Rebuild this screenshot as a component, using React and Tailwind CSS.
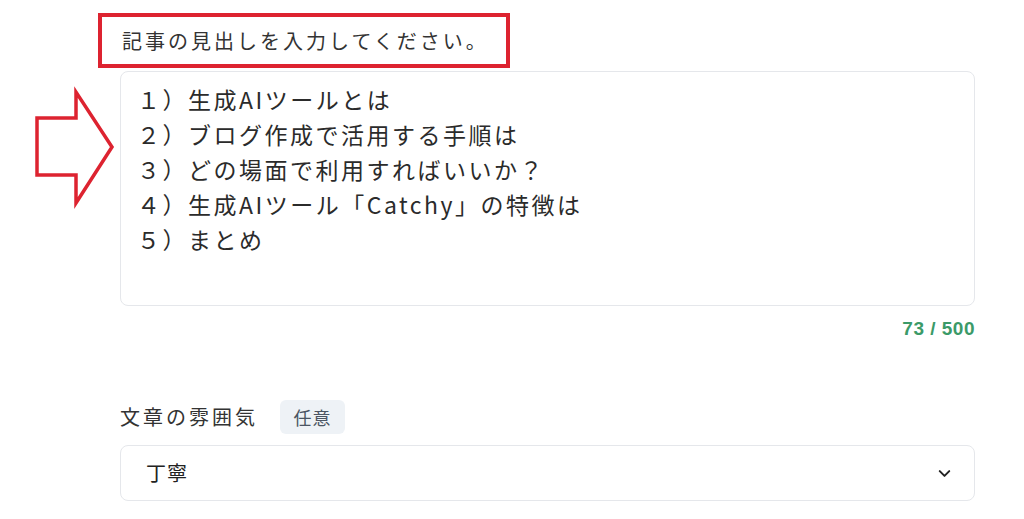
import { ChevronDown } from "lucide-react";

const HEADINGS = [
  "１）生成AIツールとは",
  "２）ブログ作成で活用する手順は",
  "３）どの場面で利用すればいいか？",
  "４）生成AIツール「Catchy」の特徴は",
  "５）まとめ",
];

function Arrow() {
  return (
    <svg
      className="absolute left-0 top-0"
      width="130"
      height="220"
      viewBox="0 0 130 220"
    >
      <polygon
        points="37,118 76,118 76,92 112,147 76,203 76,175 37,175"
        fill="none"
        stroke="#dd2330"
        strokeWidth="3.5"
        strokeLinejoin="miter"
      />
    </svg>
  );
}

export default function App() {
  return (
    <div className="relative w-[1024px] h-[519px] overflow-hidden bg-white font-['Noto_Sans_CJK_JP',sans-serif] text-[#333]">
      {/* annotation overlays */}
      <div className="absolute left-[98px] top-[13px] w-[412px] h-[55px] border-[4px] border-[#dd2330]" />
      <Arrow />

      <div className="ml-[120px] w-[855px]">
        <p className="pt-[27px] pl-[2px] text-[20px] leading-[28px] tracking-[3px]">
          記事の見出しを入力してください。
        </p>

        <div className="mt-[16px] h-[235px] rounded-lg border border-[#e5e7eb] pl-[16px] pt-[10px]">
          {HEADINGS.map((h) => (
            <p key={h} className="text-[23px] leading-[35px] tracking-[2.5px] text-[#2b2b2b]">
              {h}
            </p>
          ))}
        </div>

        <p className="mt-[11px] text-right font-['Liberation_Sans',sans-serif] text-[19px] font-bold leading-[24px] tracking-[0.5px] text-[#3b9a68]">
          73 / 500
        </p>

        <div className="mt-[59px] flex items-center gap-[22px]">
          <span className="text-[20px] leading-[34px] tracking-[3px]">文章の雰囲気</span>
          <span className="flex h-[34px] w-[65px] items-center justify-center rounded-md bg-[#eef2f6] text-[18px] tracking-[1px] text-[#4b5563]">
            任意
          </span>
        </div>

        <div className="mt-[11px] flex h-[56px] items-center justify-between rounded-lg border border-[#e5e7eb] pl-[25px] pr-[20px]">
          <span className="text-[20px] tracking-[1px] text-[#222]">丁寧</span>
          <ChevronDown size={19} strokeWidth={2.5} className="text-[#222]" />
        </div>
      </div>
    </div>
  );
}
